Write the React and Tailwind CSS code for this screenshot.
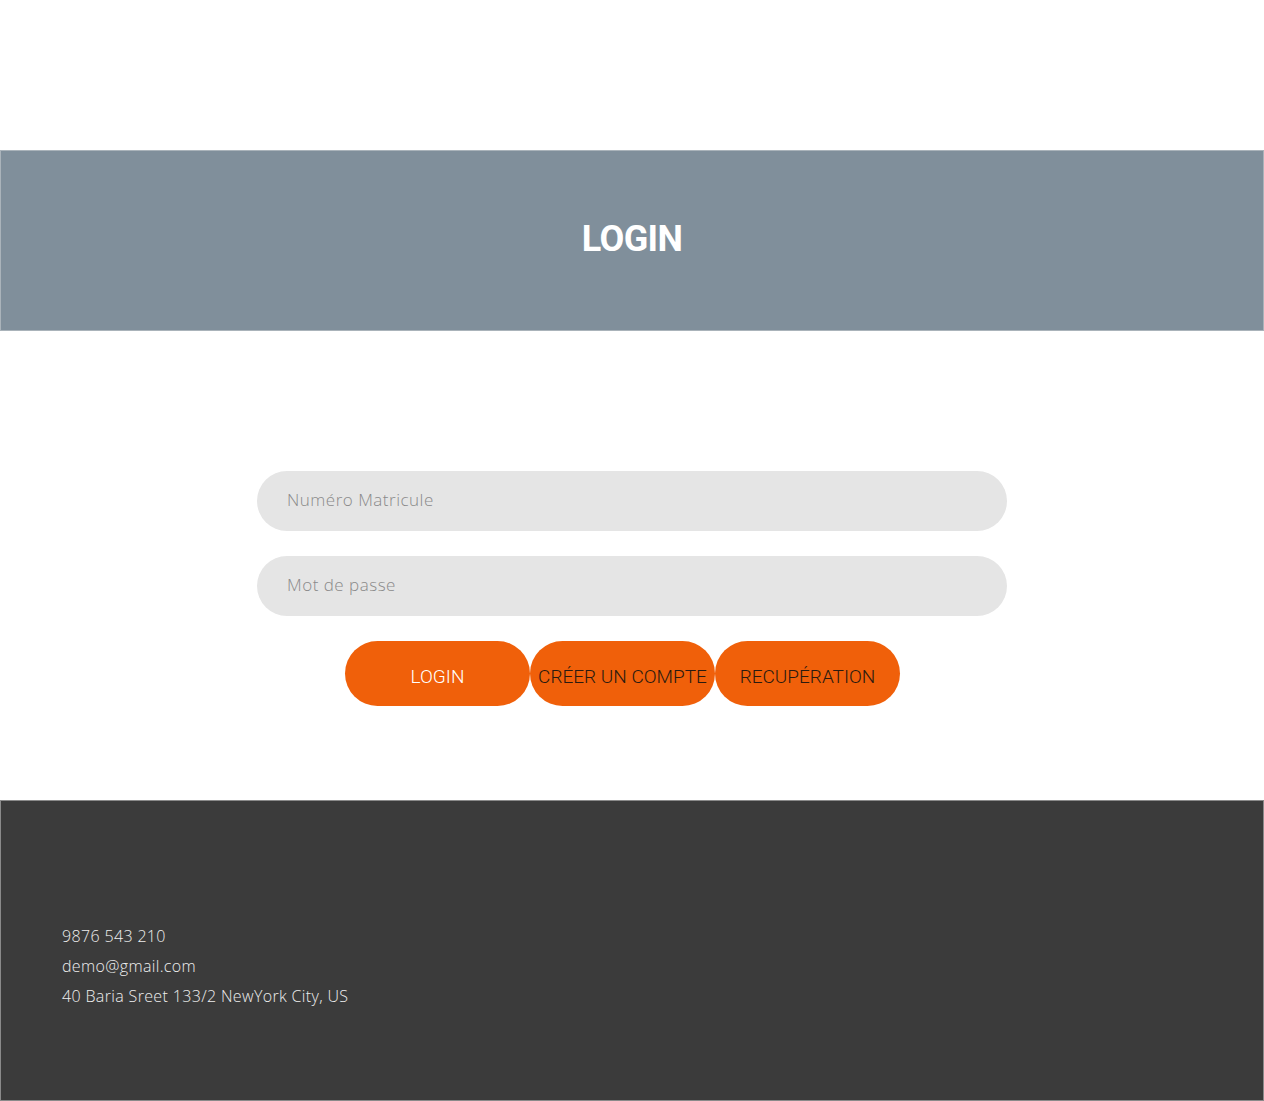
export default function App() {
  const poppins = { fontFamily: '"Open Sans", "Liberation Sans", sans-serif' };
  return (
    <div className="w-[1264px] h-[1101px] bg-white flex flex-col" style={poppins}>
      <div className="h-[150px]" />
      <header className="h-[181px] bg-[#808f9b] border border-[#aab3ba] flex items-center justify-center pb-[4px]">
        <h1 className="text-[36px] font-bold text-white tracking-[-0.6px]" style={{ fontFamily: 'Roboto, "Liberation Sans", sans-serif' }}>LOGIN</h1>
      </header>
      <main className="flex-1 flex flex-col items-center pt-[140px]">
        <div className="w-[750px] flex flex-col gap-[25px]">
          <input
            className="h-[60px] w-full rounded-full bg-[#e5e5e5] px-[30px] pb-[3px] text-[17px] tracking-[0.5px] font-light text-[#555] placeholder:text-[#8a8a8a] outline-none"
            placeholder="Numéro Matricule"
          />
          <input
            type="password"
            className="h-[60px] w-full rounded-full bg-[#e5e5e5] px-[30px] pb-[3px] text-[17px] tracking-[0.5px] font-light text-[#555] placeholder:text-[#8a8a8a] outline-none"
            placeholder="Mot de passe"
          />
        </div>
        <div className="w-[750px] flex pl-[88px] mt-[25px]" style={{ fontFamily: 'Roboto, "Liberation Sans", sans-serif' }}>
          <button className="w-[185px] h-[65px] rounded-full bg-[#f0600a] text-white text-[19px] font-light pt-[8px]">LOGIN</button>
          <button className="w-[185px] h-[65px] rounded-full bg-[#f0600a] text-[#2a1a10] text-[19px] font-light pt-[8px] whitespace-nowrap">CRÉER UN COMPTE</button>
          <button className="w-[185px] h-[65px] rounded-full bg-[#f0600a] text-[#2a1a10] text-[19px] font-light pt-[8px]">RECUPÉRATION</button>
        </div>
      </main>
      <footer className="h-[301px] bg-[#3b3b3b] border border-[#8a8a8a] pl-[61px] pt-[120px] text-[#eeeeee] text-[16px] tracking-[0.35px] font-light leading-[30px]">
        <p>9876 543 210</p>
        <p>demo@gmail.com</p>
        <p>40 Baria Sreet 133/2 NewYork City, US</p>
      </footer>
    </div>
  );
}
